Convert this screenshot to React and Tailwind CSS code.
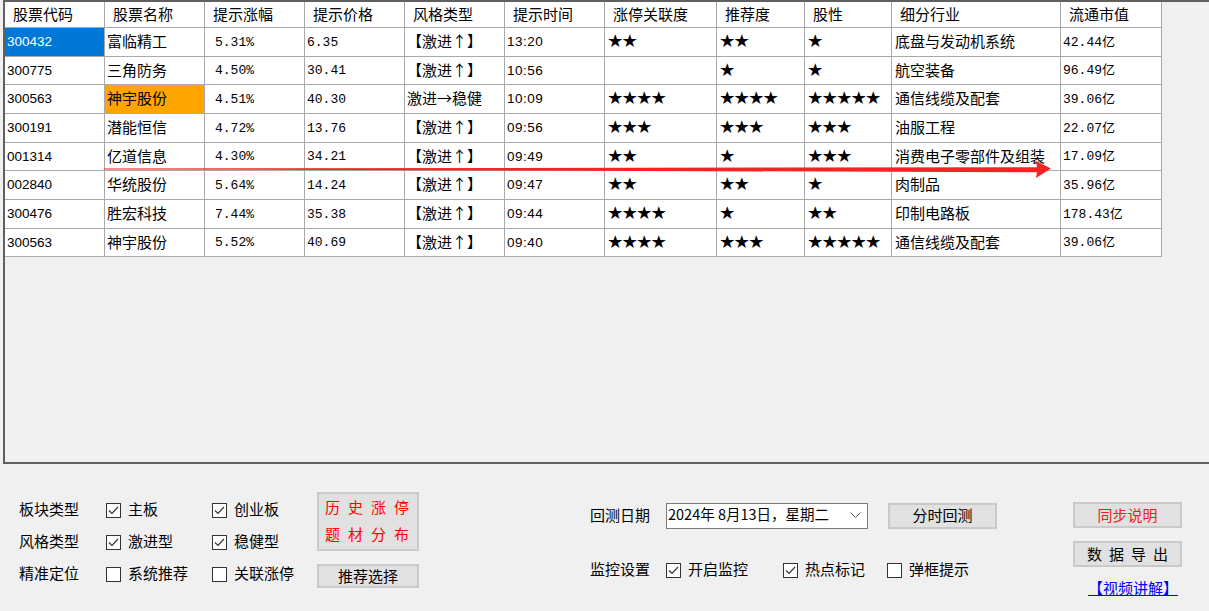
import React from 'react';

const cols = [
  { title: '股票代码', w: 'w-[100px]' },
  { title: '股票名称', w: 'w-[100px]' },
  { title: '提示涨幅', w: 'w-[100px]' },
  { title: '提示价格', w: 'w-[100px]' },
  { title: '风格类型', w: 'w-[100px]' },
  { title: '提示时间', w: 'w-[100px]' },
  { title: '涨停关联度', w: 'w-[112px]' },
  { title: '推荐度', w: 'w-[88px]' },
  { title: '股性', w: 'w-[87px]' },
  { title: '细分行业', w: 'w-[169px]' },
  { title: '流通市值', w: 'w-[101px]' },
];

const rows = [
  ['300432', '富临精工', '5.31%', '6.35', '【激进↑】', '13:20', 2, 2, 1, '底盘与发动机系统', '42.44亿'],
  ['300775', '三角防务', '4.50%', '30.41', '【激进↑】', '10:56', 0, 1, 1, '航空装备', '96.49亿'],
  ['300563', '神宇股份', '4.51%', '40.30', '激进→稳健', '10:09', 4, 4, 5, '通信线缆及配套', '39.06亿'],
  ['300191', '潜能恒信', '4.72%', '13.76', '【激进↑】', '09:56', 3, 3, 3, '油服工程', '22.07亿'],
  ['001314', '亿道信息', '4.30%', '34.21', '【激进↑】', '09:49', 2, 1, 3, '消费电子零部件及组装', '17.09亿'],
  ['002840', '华统股份', '5.64%', '14.24', '【激进↑】', '09:47', 2, 2, 1, '肉制品', '35.96亿'],
  ['300476', '胜宏科技', '7.44%', '35.38', '【激进↑】', '09:44', 4, 1, 2, '印制电路板', '178.43亿'],
  ['300563', '神宇股份', '5.52%', '40.69', '【激进↑】', '09:40', 4, 3, 5, '通信线缆及配套', '39.06亿'],
];

// row heights incl. bottom grid line
const rowH = ['h-[29px]', 'h-[28px]', 'h-[29px]', 'h-[29px]', 'h-[28px]', 'h-[29px]', 'h-[29px]', 'h-[28px]'];

const cjk = "font-['Noto_Sans_CJK_SC',sans-serif]";
const sans = "font-['Liberation_Sans','Noto_Sans_CJK_SC',sans-serif]";
const mono = "font-['Liberation_Mono','Noto_Sans_CJK_SC',monospace]";

function Cell({ w, className = '', children }) {
  return (
    <div className={`${w} h-full shrink-0 flex items-center border-r border-[#a9a9a9] overflow-hidden whitespace-nowrap leading-none ${className}`}>
      {children}
    </div>
  );
}

function Stars({ n }) {
  return <span className={`${cjk} text-[14.5px] text-black`}>{'★'.repeat(n)}</span>;
}

function CheckBox({ checked }) {
  return (
    <svg width="15" height="15" viewBox="0 0 15 15" className="shrink-0">
      <rect x="0.5" y="0.5" width="14" height="14" fill="#fff" stroke="#333" />
      {checked && <polyline points="3,7.5 6,10.5 12,4" fill="none" stroke="#333" strokeWidth="1.2" />}
    </svg>
  );
}

function Check({ checked, label, w }) {
  return (
    <div className={`${w} flex items-center`}>
      <CheckBox checked={checked} />
      <span className="ml-[7px] pb-[3px] text-[15px] leading-none text-black whitespace-nowrap">{label}</span>
    </div>
  );
}

function Btn({ className = '', children }) {
  return (
    <div className={`border-2 border-[#c9c9c9] bg-[#e1e1e1] flex items-center justify-center text-[15px] leading-none whitespace-nowrap ${className}`}>
      {children}
    </div>
  );
}

export default function App() {
  return (
    <div className={`relative w-[1209px] h-[611px] overflow-hidden bg-[#f0f0f0] ${cjk}`}>
      {/* grid panel */}
      <div className="ml-[3px] h-[464px] border-t-2 border-l-2 border-b-2 border-[#606060] bg-[#f0f0f0]">
        <div className="w-[1157px]">
          <div className="flex h-[26px] bg-white border-b border-[#a9a9a9]">
            {cols.map(c => (
              <Cell key={c.title} w={c.w} className="pl-[8px] pb-[3px] text-[15px] text-black">{c.title}</Cell>
            ))}
          </div>
          {rows.map((r, i) => (
            <div key={i} className={`flex ${rowH[i]} bg-white border-b border-[#a9a9a9]`}>
              <Cell w={cols[0].w} className={`pl-[2px] ${sans} text-[13.5px] ${i === 0 ? 'bg-[#0078d7] text-white' : 'text-black'}`}>{r[0]}</Cell>
              <Cell w={cols[1].w} className={`pl-[2px] pb-[3px] text-[15px] text-black ${i === 2 ? 'bg-[#ffa500]' : ''}`}>{r[1]}</Cell>
              <Cell w={cols[2].w} className={`pl-[10px] ${mono} text-[13px] text-black`}>{r[2]}</Cell>
              <Cell w={cols[3].w} className={`pl-[2px] ${mono} text-[13px] text-black`}>{r[3]}</Cell>
              <Cell w={cols[4].w} className="pl-[2px] pb-[3px] text-[15px] text-black">{r[4]}</Cell>
              <Cell w={cols[5].w} className={`pl-[2px] ${sans} text-[13.5px] tracking-[0.5px] text-black`}>{r[5]}</Cell>
              <Cell w={cols[6].w} className="pl-[3px] pb-[3px]"><Stars n={r[6]} /></Cell>
              <Cell w={cols[7].w} className="pl-[3px] pb-[3px]"><Stars n={r[7]} /></Cell>
              <Cell w={cols[8].w} className="pl-[3px] pb-[3px]"><Stars n={r[8]} /></Cell>
              <Cell w={cols[9].w} className="pl-[3px] pb-[3px] text-[15px] text-black">{r[9]}</Cell>
              <Cell w={cols[10].w} className={`pl-[2px] ${mono} text-[13px] text-black`}>{r[10]}</Cell>
            </div>
          ))}
        </div>
      </div>

      {/* bottom controls */}
      <div className="h-[147px] flex items-start text-black">
        <div className="ml-[19px] mt-[30px] flex flex-col">
          <div className="h-[32px] flex items-center">
            <span className="w-[87px] pb-[3px] text-[15px] leading-none">板块类型</span>
            <Check checked label="主板" w="w-[106px]" />
            <Check checked label="创业板" w="w-[105px]" />
          </div>
          <div className="h-[32px] flex items-center">
            <span className="w-[87px] pb-[3px] text-[15px] leading-none">风格类型</span>
            <Check checked label="激进型" w="w-[106px]" />
            <Check checked label="稳健型" w="w-[105px]" />
          </div>
          <div className="h-[32px] flex items-center">
            <span className="w-[87px] pb-[3px] text-[15px] leading-none">精准定位</span>
            <Check label="系统推荐" w="w-[106px]" />
            <Check label="关联涨停" w="w-[105px]" />
          </div>
        </div>

        <div className="mt-[28px] w-[102px] flex flex-col">
          <Btn className="h-[59px] flex-col gap-[12px] pb-[3px] text-[#ff0000] tracking-[8px] pl-[6px]">
            <span>历史涨停</span>
            <span>题材分布</span>
          </Btn>
          <Btn className="mt-[13px] h-[24px] pb-[2px]">推荐选择</Btn>
        </div>

        <div className="ml-[171px] mt-[38px] flex flex-col">
          <div className="h-[27px] flex items-center">
            <span className="w-[76px] pb-[3px] text-[15px] leading-none">回测日期</span>
            <div className="w-[202px] h-[26px] bg-white border border-[#7a7a7a] flex items-center pl-[1px] pr-[6px]">
              <span className="pb-[3px] text-[14.5px] leading-none whitespace-nowrap">2024年 8月13日，星期二</span>
              <svg width="11" height="7" viewBox="0 0 11 7" className="ml-auto">
                <polyline points="0.5,0.5 5.5,5.5 10.5,0.5" fill="none" stroke="#555" strokeWidth="1" />
              </svg>
            </div>
            <Btn className="ml-[20px] w-[109px] h-[26px] pb-[2px]">分时回测</Btn>
          </div>
          <div className="mt-[28px] h-[26px] flex items-center">
            <span className="w-[76px] pb-[3px] text-[15px] leading-none">监控设置</span>
            <Check checked label="开启监控" w="w-[117px]" />
            <Check checked label="热点标记" w="w-[104px]" />
            <Check label="弹框提示" w="w-[100px]" />
          </div>
        </div>

        <div className="ml-[76px] mt-[38px] w-[109px] flex flex-col">
          <Btn className="h-[26px] pb-[2px] text-[#f51c1c]">同步说明</Btn>
          <Btn className="mt-[13px] h-[26px] pb-[2px] tracking-[7px] pl-[7px]">数据导出</Btn>
          <div className="mt-[10px] h-[20px] flex items-center pl-[15px]">
            <span className="text-[15px] leading-none text-[#0000ff] underline whitespace-nowrap">【视频讲解】</span>
          </div>
        </div>
      </div>

      {/* red arrow over the grid */}
      <svg className="absolute left-0 top-0 pointer-events-none" width="1209" height="611">
        <polygon
          points="104,168.4 1037,167.3 1036,161 1051,168.6 1036,178 1037,172.2 104,169.4"
          fill="#f52323"
        />
      </svg>
    </div>
  );
}
